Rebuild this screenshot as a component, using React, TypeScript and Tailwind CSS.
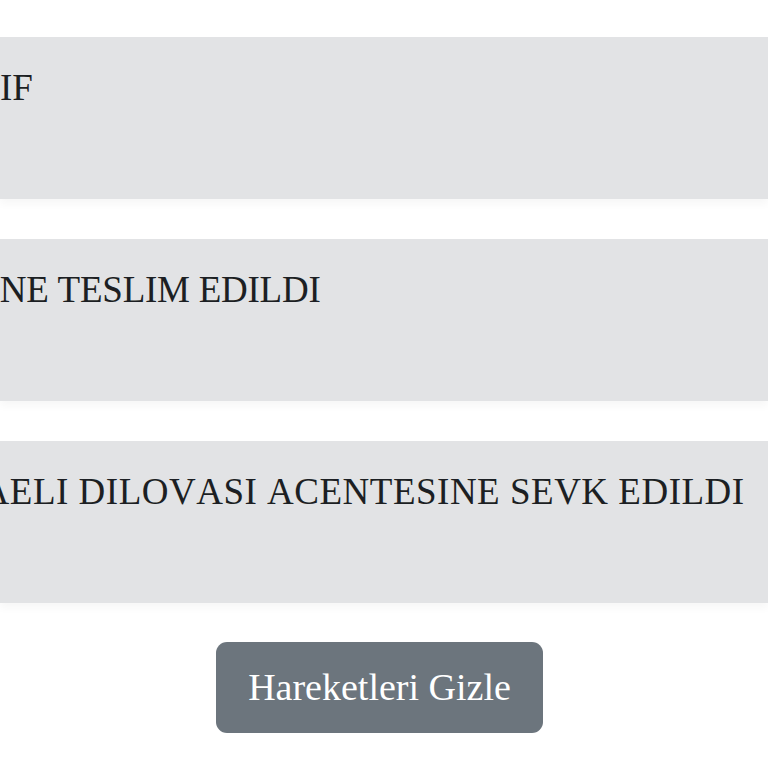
import React from "react";

type Movement = {
  text: string;
  shift: string;
};

const movements: Movement[] = [
  { text: "AKTIF", shift: "-ml-[76px]" },
  { text: "ALICISINE TESLIM EDILDI", shift: "-ml-[130px] tracking-[-0.25px]" },
  { text: "KOCAELI DILOVASI ACENTESINE SEVK EDILDI", shift: "-ml-[97px] tracking-[0.5px]" },
];

export default function App() {
  return (
    <div className="min-h-screen bg-white overflow-hidden font-['Liberation_Serif','Times_New_Roman',serif] [font-kerning:none]">
      <div className="pt-[37px] flex flex-col gap-[40px]">
        {/* Hareketler */}
        {movements.map((m, i) => (
          <div
            key={i}
            className="h-[162px] w-full bg-[#e2e3e5] shadow-[0_5px_8px_rgba(0,0,0,0.035)] overflow-hidden pt-[30px]"
          >
            <p className={`${m.shift} whitespace-nowrap text-[37px] leading-[1.15] text-[#1c1f23]`}>{m.text}</p>
          </div>
        ))}
      </div>

      <div className="flex justify-center pt-[39px] pr-[9px]">
        <button className="h-[91px] w-[327px] rounded-[11px] bg-[#6c757d] text-[38px] text-white">
          Hareketleri Gizle
        </button>
      </div>
    </div>
  );
}
